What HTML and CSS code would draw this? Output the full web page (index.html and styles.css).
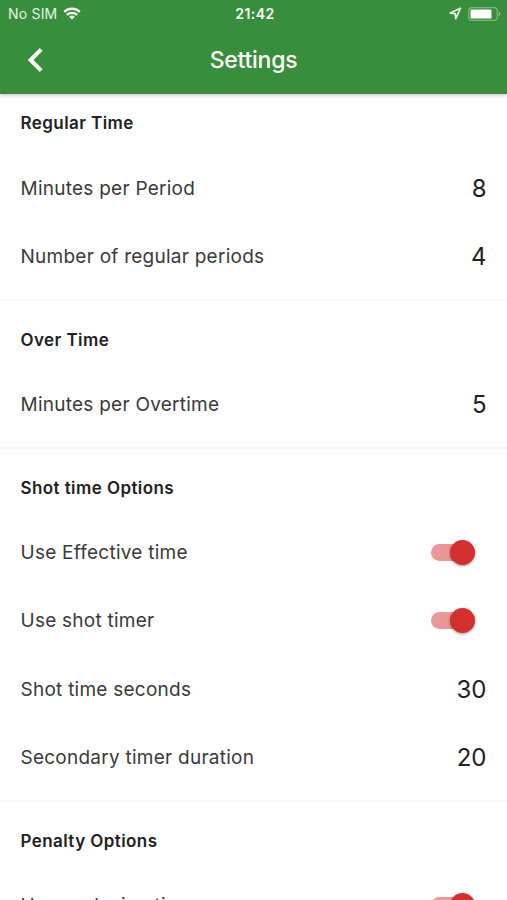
FILE: index.html
```
<!DOCTYPE html>
<html>
	<head>
		<meta charset="utf-8"/>
		<title>Settings</title>
		<link rel="stylesheet" href="styles.css">
	</head>
	<body>
		<header class="top">
			<div class="status">
				<div class="carrier">
					<span>No SIM</span>
					<svg class="wifi" width="18" height="13" viewBox="0 0 18 13" fill="none" stroke="#fff" stroke-width="2.3">
						<path d="M1.2 4.9a11 11 0 0 1 15.6 0"/>
						<path d="M3.9 7.9a7.2 7.2 0 0 1 10.2 0"/>
						<path d="M9 12.6L6.2 9.9a4 4 0 0 1 5.6 0z" fill="#fff" stroke="none"/>
					</svg>
				</div>
				<div class="clock">21:42</div>
				<div class="power">
					<svg width="13" height="13" viewBox="0 0 13 13" fill="none" stroke="#e4f3e5" stroke-width="1.7" stroke-linejoin="round">
						<path d="M11.5 1.3L1.2 6.1l5 .6.6 5z"/>
					</svg>
					<svg width="33" height="14" viewBox="0 0 33 14">
						<rect x=".7" y=".7" width="28.6" height="12.6" rx="3.4" fill="none" stroke="#7fb982" stroke-width="1.2"/>
						<rect x="2.5" y="2.5" width="21" height="9" rx="1.2" fill="#fff"/>
						<path d="M30.7 4.8q1.8.8 1.8 2.2t-1.8 2.2z" fill="#8fc292"/>
					</svg>
				</div>
			</div>
			<div class="bar">
				<svg class="back" width="16" height="26" viewBox="0 0 16 26" fill="none" stroke="#fff" stroke-width="4">
					<path d="M14.2 2.4L3.6 13l10.6 10.6"/>
				</svg>
				<h1>Settings</h1>
			</div>
		</header>

		<main>
			<section>
				<h2>Regular Time</h2>
				<div class="row"><span>Minutes per Period</span><b>8</b></div>
				<div class="row"><span>Number of regular periods</span><b>4</b></div>
			</section>
			<section>
				<h2>Over Time</h2>
				<div class="row"><span>Minutes per Overtime</span><b>5</b></div>
			</section>
			<section>
				<h2>Shot time Options</h2>
				<div class="row"><span>Use Effective time</span><i class="switch"></i></div>
				<div class="row"><span>Use shot timer</span><i class="switch"></i></div>
				<div class="row"><span>Shot time seconds</span><b>30</b></div>
				<div class="row"><span>Secondary timer duration</span><b>20</b></div>
			</section>
			<section>
				<h2>Penalty Options</h2>
				<div class="row"><span>Use exclusion time</span><i class="switch"></i></div>
			</section>
		</main>
	</body>
</html>
```

FILE: styles.css
```
*{box-sizing: border-box;}
html,body{height: 100%;}
body{margin: 0;display: flex;flex-direction: column;overflow: hidden;background: #fefefe;color: #212121;font-family: Inter,"Liberation Sans",sans-serif;}

.top{flex: none;height: 94px;background: #388e3c;color: #fff;box-shadow: 0 1px 4px rgba(0,0,0,.25);z-index: 1;}
.status{display: grid;grid-template-columns: 1fr auto 1fr;align-items: center;height: 27px;padding: 0 6px 0 8px;font-size: 14px;}
.carrier{display: flex;align-items: center;gap: 6px;color: #e4f3e5;letter-spacing: .2px;}
.clock{padding-left: 1px;font-weight: 600;font-size: 14px;letter-spacing: .5px;}
.power{display: flex;align-items: center;justify-content: flex-end;gap: 6px;}

.bar{display: grid;grid-template-columns: 60px 1fr 60px;align-items: center;height: 66px;}
.back{margin-left: 26.5px;}
h1{margin: 0;text-align: center;font-size: 23px;font-weight: 500;letter-spacing: -.25px;}

main{flex: 1;min-height: 0;overflow: hidden;margin-top: -.5px;}
section + section{margin-top: 8.4px;border-top: 2px solid #f8f8f8;padding-top: 8.6px;}
h2{display: flex;align-items: center;height: 60.5px;margin: 0;padding: 0 20.5px .6px;font-size: 17px;font-weight: 600;letter-spacing: .42px;}
.row{display: flex;align-items: center;justify-content: space-between;height: 68.4px;padding: 0 20.5px;}
.row span{font-size: 19px;letter-spacing: .25px;color: #3a3a3a;}
.row b{font-size: 24px;font-weight: 400;}

.switch{display: flex;align-items: center;justify-content: flex-end;width: 44px;height: 17px;margin-right: 11.5px;border-radius: 9px;background: #ea9797;}
.switch::after{content: "";width: 25px;height: 25px;border-radius: 50%;background: #d32f2f;box-shadow: 0 1px 3px rgba(0,0,0,.4);}
```
